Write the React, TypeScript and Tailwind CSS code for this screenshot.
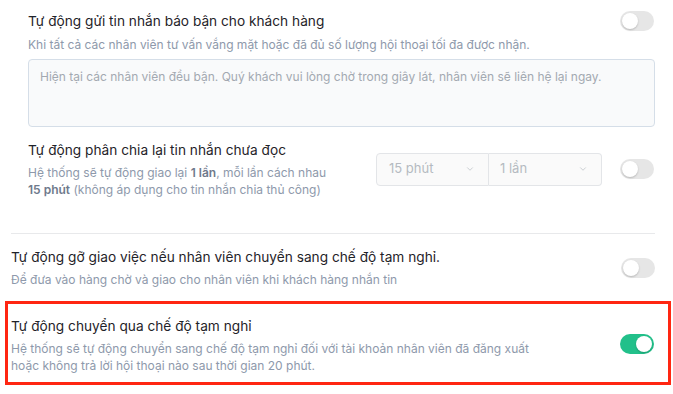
import { ChevronDown } from "lucide-react";

function Toggle({ on = false }: { on?: boolean }) {
    return (
        <div
            className={
                on
                    ? "w-[34px] h-5 rounded-full bg-[#22c08a] flex items-center justify-end px-[2px] shrink-0"
                    : "w-[34px] h-5 rounded-full bg-[#e6e6e6] flex items-center justify-start px-[2px] shrink-0"
            }
        >
            <div className="w-4 h-4 rounded-full bg-white shadow-[0_1px_2px_rgba(0,0,0,0.2)]" />
        </div>
    );
}

function Select({ value, side }: { value: string; side: "left" | "right" }) {
    return (
        <div
            className={
                side === "left"
                    ? "w-[113px] h-[33px] flex items-center justify-between pl-3 pr-[13px] border border-[#e3e5e8] bg-[#fafafa] rounded-l"
                    : "w-[113px] h-[33px] flex items-center justify-between pl-[11px] pr-[13px] border border-l-0 border-[#e3e5e8] bg-[#fafafa] rounded-r"
            }
        >
            <span className="text-[13px] text-[#b5bac1]">{value}</span>
            <ChevronDown className="w-[10px] h-[10px] text-[#aeb3ba]" strokeWidth={1.5} />
        </div>
    );
}

export default function App() {
    return (
        <div
            className="w-[673px] h-[394px] bg-white overflow-hidden"
            style={{ fontFamily: "Inter, 'Noto Sans', sans-serif" }}
        >
            {/* Báo bận */}
            <div className="pt-[11px] pl-[28px] pr-[18px]">
                <div className="flex items-center justify-between h-5 pr-px">
                    <span className="text-[13.7px] leading-5 text-[#1f2329]">
                        Tự động gửi tin nhắn báo bận cho khách hàng
                    </span>
                    <Toggle />
                </div>
                <p className="mt-[6px] text-[12px] leading-4 text-[#8e99ab]">
                    Khi tất cả các nhân viên tư vấn vắng mặt hoặc đã đủ số lượng hội thoại tối đa được nhận.
                </p>
                <div className="mt-[6px] h-[68px] rounded border border-[#d5dee8] bg-[#f9fafb] px-[11px] pt-[9px] text-[12px] leading-4 text-[#a3a9b1]">
                    Hiện tại các nhân viên đều bận. Quý khách vui lòng chờ trong giây lát, nhân viên sẽ liên hệ lại ngay.
                </div>
            </div>

            {/* Phân chia lại */}
            <div className="mt-[13px] pl-[28px] pr-[19px] flex items-center">
                <div className="w-[348px]">
                    <p className="text-[13.7px] leading-5 text-[#1f2329]">Tự động phân chia lại tin nhắn chưa đọc</p>
                    <p className="mt-1 text-[12px] leading-[17px] text-[#8e99ab]">
                        Hệ thống sẽ tự động giao lại <span className="font-semibold text-[#6f7a8c]">1 lần</span>, mỗi lần cách nhau
                        <br />
                        <span className="font-semibold text-[#6f7a8c]">15 phút</span> (không áp dụng cho tin nhắn chia thủ công)
                    </p>
                </div>
                <div className="flex">
                    <Select value="15 phút" side="left" />
                    <Select value="1 lần" side="right" />
                </div>
                <div className="ml-auto">
                    <Toggle />
                </div>
            </div>

            <div className="mt-[35px] ml-[11px] mr-[18px] h-px bg-[#e8e9eb]" />

            {/* Gỡ giao việc */}
            <div className="mt-[13px] pl-[11px] pr-[18px] flex items-center justify-between">
                <div>
                    <p className="text-[13.7px] leading-5 text-[#1f2329]">
                        Tự động gỡ giao việc nếu nhân viên chuyển sang chế độ tạm nghỉ.
                    </p>
                    <p className="mt-[5px] text-[12px] leading-4 text-[#8e99ab]">
                        Để đưa vào hàng chờ và giao cho nhân viên khi khách hàng nhắn tin
                    </p>
                </div>
                <Toggle />
            </div>

            {/* Tạm nghỉ */}
            <div className="mt-[13px] ml-[5px] mr-[2px] border-[3px] border-[#ff2612] pt-3 pb-[8px] pl-[3px] pr-[14px] flex items-center justify-between">
                <div>
                    <p className="text-[13.7px] leading-5 text-[#1f2329]">Tự động chuyển qua chế độ tạm nghỉ</p>
                    <p className="mt-[4px] text-[12px] leading-[17px] text-[#8e99ab]">
                        Hệ thống sẽ tự động chuyển sang chế độ tạm nghỉ đối với tài khoản nhân viên đã đăng xuất
                        <br />
                        hoặc không trả lời hội thoại nào sau thời gian 20 phút.
                    </p>
                </div>
                <div className="-mt-[2px]">
                    <Toggle on />
                </div>
            </div>
        </div>
    );
}
